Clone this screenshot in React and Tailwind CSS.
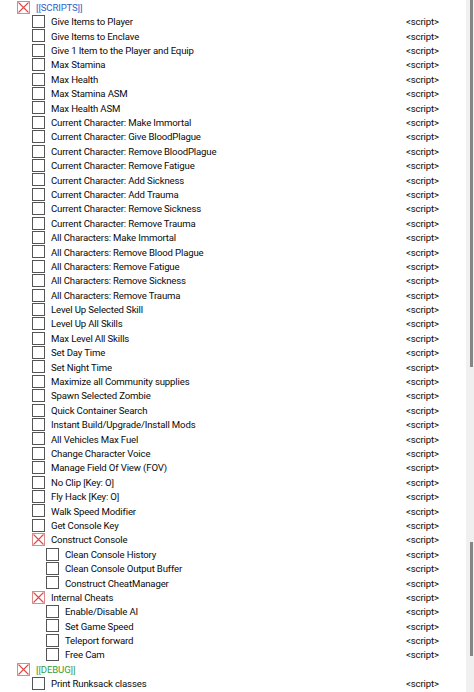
import React from "react";

const rows = [
  ["[[SCRIPTS]]", 0, true, "blue", false],
  ["Give Items to Player", 1, false, null, true],
  ["Give Items to Enclave", 1, false, null, true],
  ["Give 1 Item to the Player and Equip", 1, false, null, true],
  ["Max Stamina", 1, false, null, true],
  ["Max Health", 1, false, null, true],
  ["Max Stamina ASM", 1, false, null, true],
  ["Max Health ASM", 1, false, null, true],
  ["Current Character: Make Immortal", 1, false, null, true],
  ["Current Character: Give BloodPlague", 1, false, null, true],
  ["Current Character: Remove BloodPlague", 1, false, null, true],
  ["Current Character: Remove Fatigue", 1, false, null, true],
  ["Current Character: Add Sickness", 1, false, null, true],
  ["Current Character: Add Trauma", 1, false, null, true],
  ["Current Character: Remove Sickness", 1, false, null, true],
  ["Current Character: Remove Trauma", 1, false, null, true],
  ["All Characters: Make Immortal", 1, false, null, true],
  ["All Characters: Remove Blood Plague", 1, false, null, true],
  ["All Characters: Remove Fatigue", 1, false, null, true],
  ["All Characters: Remove Sickness", 1, false, null, true],
  ["All Characters: Remove Trauma", 1, false, null, true],
  ["Level Up Selected Skill", 1, false, null, true],
  ["Level Up All Skills", 1, false, null, true],
  ["Max Level All Skills", 1, false, null, true],
  ["Set Day Time", 1, false, null, true],
  ["Set Night Time", 1, false, null, true],
  ["Maximize all Community supplies", 1, false, null, true],
  ["Spawn Selected Zombie", 1, false, null, true],
  ["Quick Container Search", 1, false, null, true],
  ["Instant Build/Upgrade/Install Mods", 1, false, null, true],
  ["All Vehicles Max Fuel", 1, false, null, true],
  ["Change Character Voice", 1, false, null, true],
  ["Manage Field Of View (FOV)", 1, false, null, true],
  ["No Clip [Key: O]", 1, false, null, true],
  ["Fly Hack [Key: O]", 1, false, null, true],
  ["Walk Speed Modifier", 1, false, null, true],
  ["Get Console Key", 1, false, null, true],
  ["Construct Console", 1, true, null, true],
  ["Clean Console History", 2, false, null, true],
  ["Clean Console Output Buffer", 2, false, null, true],
  ["Construct CheatManager", 2, false, null, true],
  ["Internal Cheats", 1, true, null, true],
  ["Enable/Disable AI", 2, false, null, true],
  ["Set Game Speed", 2, false, null, true],
  ["Teleport forward", 2, false, null, true],
  ["Free Cam", 2, false, null, true],
  ["[[DEBUG]]", 0, true, "green", false],
  ["Print Runksack classes", 1, false, null, true],
];

function Box({ checked }) {
  if (checked) {
    return (
      <svg width="13" height="13" viewBox="0 0 13 13" className="shrink-0">
        <rect x="0.5" y="0.5" width="12" height="12" fill="#fff" stroke="#d98a8a" />
        <path d="M1.5 1.5 L11.5 11.5 M11.5 1.5 L1.5 11.5" stroke="#e04848" strokeWidth="1.1" />
      </svg>
    );
  }
  return <div className="w-[13px] h-[13px] shrink-0 border border-[#555555] bg-white" />;
}

const indent = ["pl-[17px]", "pl-[32px]", "pl-[46px]"];

export default function App() {
  return (
    <div
      className="flex w-[474px] h-[692px] bg-white overflow-hidden text-[#0a0a0a]"
      style={{ fontFamily: 'Roboto, sans-serif' }}
    >
      <div className="flex-1 flex flex-col">
        {rows.map(([label, level, checked, color, script], i) => (
          <div key={i} className="h-[14.4px] flex items-center shrink-0">
            <div className={`w-[406px] flex items-center gap-[6px] ${indent[level]}`}>
              <Box checked={checked} />
              <span
                className={`text-[9.6px] tracking-[-0.15px] leading-none whitespace-nowrap pt-[1px] ${
                  color === "blue" ? "text-[#2f63c8]" : color === "green" ? "text-[#3a9a3a]" : ""
                }`}
              >
                {label}
              </span>
            </div>
            {script && <span className="text-[9.6px] tracking-[-0.15px] leading-none pt-[1px]">{"<script>"}</span>}
          </div>
        ))}
      </div>
      <div className="w-[8px] h-full bg-[#f0f0f0] flex flex-col shrink-0">
        <div className="ml-[4px] w-[3px] h-[367px] bg-[#858585]" />
        <div className="ml-[4px] w-[3px] h-[114px] mt-[175px] bg-[#858585]" />
      </div>
    </div>
  );
}
